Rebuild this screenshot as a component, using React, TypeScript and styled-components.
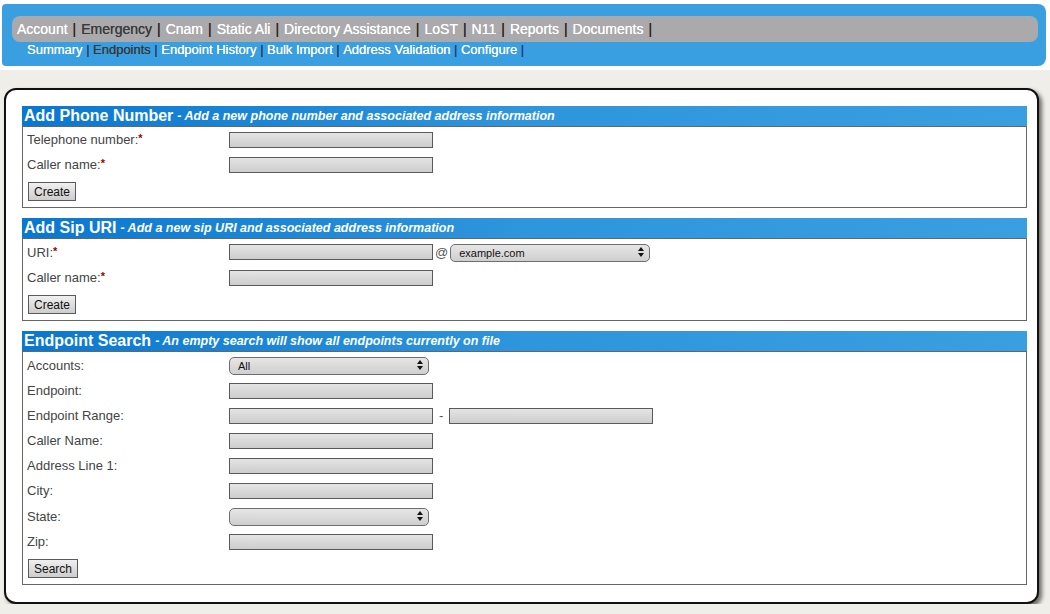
import React from 'react';
import styled, { createGlobalStyle } from 'styled-components';

const GlobalStyle = createGlobalStyle`
  html, body {
    margin: 0;
    padding: 0;
    background: #f0eee8;
  }
  body {
    font-family: "Liberation Sans", Arial, Helvetica, sans-serif;
  }
  * { box-sizing: border-box; }
`;

const Page = styled.div`
  width: 1050px;
`;

const HeaderArea = styled.div`
  background: #ffffff;
  padding: 4px 4px 4px 2px;
`;

const HeaderBar = styled.div`
  display: flex;
  flex-direction: column;
  height: 62px;
  background: #3a9fe0;
  border-radius: 4px 8px 8px 4px;
  padding: 12px 8px 0 10px;
`;

const TopNav = styled.div`
  display: flex;
  align-items: center;
  height: 26px;
  background: #aaaaac;
  border-radius: 8px;
  padding-left: 5px;
  font-size: 14px;
  white-space: nowrap;
  text-shadow: 0 0 0.4px currentColor;
`;

const SubNav = styled.div`
  display: flex;
  align-items: center;
  height: 15px;
  padding-left: 15px;
  font-size: 13px;
  white-space: nowrap;
  text-shadow: 0 0 0.4px currentColor;
`;

const NavLink = styled.a<{ $active?: boolean }>`
  color: ${p => (p.$active ? '#3a3a3a' : '#ffffff')};
  text-decoration: none;
  cursor: pointer;
`;

const NavSep = styled.span<{ $tone: string; $gap: number }>`
  color: ${p => p.$tone};
  margin: 0 ${p => p.$gap}px;
`;

const Panel = styled.div`
  margin: 18px 0 0 4px;
  width: 1035px;
  background: #ffffff;
  border: 2px solid #111111;
  border-radius: 12px;
  box-shadow: 3px 3px 4px rgba(0, 0, 0, 0.55);
  padding: 16px 10px 17px 16px;
  display: flex;
  flex-direction: column;
  gap: 10px;
`;

const Section = styled.div`
  display: flex;
  flex-direction: column;
`;

const SectionHeader = styled.div`
  display: flex;
  align-items: center;
  height: 20px;
  padding-left: 2px;
  background: linear-gradient(to right, #0a77d0, #2f95dc 50%, #3a9fe0);
  color: #ffffff;
  white-space: nowrap;
`;

const SectionTitle = styled.span`
  font-size: 16px;
  font-weight: bold;
`;

const SectionNote = styled.span`
  font-size: 12.5px;
  font-weight: bold;
  font-style: italic;
  margin-left: 4px;
`;

const SectionBody = styled.div`
  border: 1px solid #666666;
  padding: 0 4px 6px 4px;
  display: flex;
  flex-direction: column;
`;

const Row = styled.div<{ $tall?: boolean }>`
  display: grid;
  grid-template-columns: 202px auto;
  align-items: center;
  height: ${p => (p.$tall ? 26 : 25)}px;
`;

const Label = styled.label`
  font-size: 13px;
  color: #444444;
`;

const Req = styled.span`
  color: #a00000;
  font-weight: bold;
  font-size: 11px;
  vertical-align: top;
`;

const Fields = styled.div`
  display: flex;
  align-items: center;
`;

const TextInput = styled.input`
  width: 204px;
  height: 16px;
  border: 1px solid #5a5a5a;
  background: linear-gradient(#e4e4e4, #cdcdcd);
  padding: 0 3px;
  font-size: 11px;
  font-family: inherit;
`;

const Joiner = styled.span`
  font-size: 13px;
  color: #555555;
  margin: 0 2px;
`;

const Dash = styled.span`
  font-size: 13px;
  color: #555555;
  margin: 0 6px;
`;

const SelectWrap = styled.div`
  position: relative;
  width: 200px;
  height: 18px;
`;

const SelectBox = styled.select`
  appearance: none;
  -webkit-appearance: none;
  width: 100%;
  height: 100%;
  border: 1px solid #6e6e6e;
  border-radius: 5px;
  background: linear-gradient(#e6e6e6, #cfcfcf);
  padding: 0 0 0 8px;
  font-size: 11px;
  font-family: inherit;
  color: #111111;
`;

const SelectArrows = styled.svg`
  position: absolute;
  right: 6px;
  top: 4px;
  pointer-events: none;
`;

const Button = styled.button`
  align-self: flex-start;
  margin-top: 5px;
  height: 19px;
  padding: 0 5px;
  border: 1px solid #5a5a5a;
  background: linear-gradient(#f0f0f0, #cdcdcd);
  font-size: 12px;
  font-family: inherit;
  color: #111111;
  margin-left: 1px;
`;

function Select({ value }: { value?: string }) {
  return (
    <SelectWrap>
      <SelectBox defaultValue={value ?? ''}>
        <option value={value ?? ''}>{value ?? ''}</option>
      </SelectBox>
      <SelectArrows width="6" height="10" viewBox="0 0 6 10">
        <path d="M3 0 L6 4 L0 4 Z" fill="#111" />
        <path d="M3 10 L6 6 L0 6 Z" fill="#111" />
      </SelectArrows>
    </SelectWrap>
  );
}

const mainNav = [
  { name: 'Account' },
  { name: 'Emergency', active: true },
  { name: 'Cnam' },
  { name: 'Static Ali' },
  { name: 'Directory Assistance' },
  { name: 'LoST' },
  { name: 'N11' },
  { name: 'Reports' },
  { name: 'Documents' },
];

const subNav = [
  { name: 'Summary' },
  { name: 'Endpoints', active: true },
  { name: 'Endpoint History' },
  { name: 'Bulk Import' },
  { name: 'Address Validation' },
  { name: 'Configure' },
];

function FieldLabel({ text, required }: { text: string; required?: boolean }) {
  return (
    <Label>
      {text}
      {required && <Req>*</Req>}
    </Label>
  );
}

export default function App(): JSX.Element {
  return (
    <Page>
      <GlobalStyle />
      <HeaderArea>
        <HeaderBar>
          <TopNav>
            {mainNav.map(item => (
              <React.Fragment key={item.name}>
                <NavLink $active={item.active}>{item.name}</NavLink>
                <NavSep $tone="#2e2620" $gap={5}>|</NavSep>
              </React.Fragment>
            ))}
          </TopNav>
          <SubNav>
            {subNav.map(item => (
              <React.Fragment key={item.name}>
                <NavLink $active={item.active}>{item.name}</NavLink>
                <NavSep $tone="#1f3f74" $gap={3.5}>|</NavSep>
              </React.Fragment>
            ))}
          </SubNav>
        </HeaderBar>
      </HeaderArea>

      <Panel>
        <Section>
          <SectionHeader>
            <SectionTitle>Add Phone Number</SectionTitle>
            <SectionNote>- Add a new phone number and associated address information</SectionNote>
          </SectionHeader>
          <SectionBody>
            <Row>
              <FieldLabel text="Telephone number:" required />
              <Fields>
                <TextInput />
              </Fields>
            </Row>
            <Row>
              <FieldLabel text="Caller name:" required />
              <Fields>
                <TextInput />
              </Fields>
            </Row>
            <Button>Create</Button>
          </SectionBody>
        </Section>

        <Section>
          <SectionHeader>
            <SectionTitle>Add Sip URI</SectionTitle>
            <SectionNote>- Add a new sip URI and associated address information</SectionNote>
          </SectionHeader>
          <SectionBody>
            <Row $tall>
              <FieldLabel text="URI:" required />
              <Fields>
                <TextInput />
                <Joiner>@</Joiner>
                <Select value="example.com" />
              </Fields>
            </Row>
            <Row>
              <FieldLabel text="Caller name:" required />
              <Fields>
                <TextInput />
              </Fields>
            </Row>
            <Button>Create</Button>
          </SectionBody>
        </Section>

        <Section>
          <SectionHeader>
            <SectionTitle>Endpoint Search</SectionTitle>
            <SectionNote>- An empty search will show all endpoints currently on file</SectionNote>
          </SectionHeader>
          <SectionBody>
            <Row $tall>
              <FieldLabel text="Accounts:" />
              <Fields>
                <Select value="All" />
              </Fields>
            </Row>
            <Row>
              <FieldLabel text="Endpoint:" />
              <Fields>
                <TextInput />
              </Fields>
            </Row>
            <Row>
              <FieldLabel text="Endpoint Range:" />
              <Fields>
                <TextInput />
                <Dash>-</Dash>
                <TextInput />
              </Fields>
            </Row>
            <Row>
              <FieldLabel text="Caller Name:" />
              <Fields>
                <TextInput />
              </Fields>
            </Row>
            <Row>
              <FieldLabel text="Address Line 1:" />
              <Fields>
                <TextInput />
              </Fields>
            </Row>
            <Row>
              <FieldLabel text="City:" />
              <Fields>
                <TextInput />
              </Fields>
            </Row>
            <Row $tall>
              <FieldLabel text="State:" />
              <Fields>
                <Select />
              </Fields>
            </Row>
            <Row>
              <FieldLabel text="Zip:" />
              <Fields>
                <TextInput />
              </Fields>
            </Row>
            <Button>Search</Button>
          </SectionBody>
        </Section>
      </Panel>
    </Page>
  );
}
